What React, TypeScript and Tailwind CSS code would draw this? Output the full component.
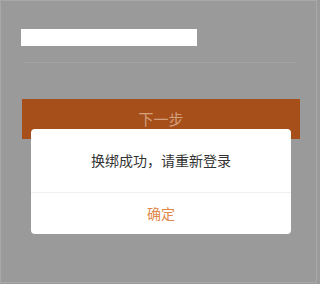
export default function App() {
  return (
    <div className="relative w-[320px] h-[284px] bg-[#9a9a9a] overflow-hidden" style={{ fontFamily: '"Noto Sans CJK SC", "Noto Sans", sans-serif' }}>
      <div className="w-[317px] h-[283px] border border-[#a8a8a8] flex flex-col">
        <div className="ml-[20px] mt-[28px] w-[176px] h-[17px] bg-white"></div>
        <div className="ml-[23px] mt-[16px] w-[272px] h-px bg-[#a2a2a2]"></div>
        <div className="ml-[21px] mt-[36px] w-[278px] h-[40px] bg-[#a64f1b] flex items-center justify-center text-[15px] text-[#d4a07c]">
          下一步
        </div>
      </div>
      <div className="absolute left-[31px] top-[129px] w-[260px] h-[105px] bg-white rounded-[4px] flex flex-col">
        <div className="h-[64px] flex items-center justify-center text-[14px] text-[#333333] border-b border-[#f0f0f0]">
          换绑成功，请重新登录
        </div>
        <div className="flex-1 flex items-center justify-center text-[14px] text-[#e0874a]">
          确定
        </div>
      </div>
    </div>
  );
}
